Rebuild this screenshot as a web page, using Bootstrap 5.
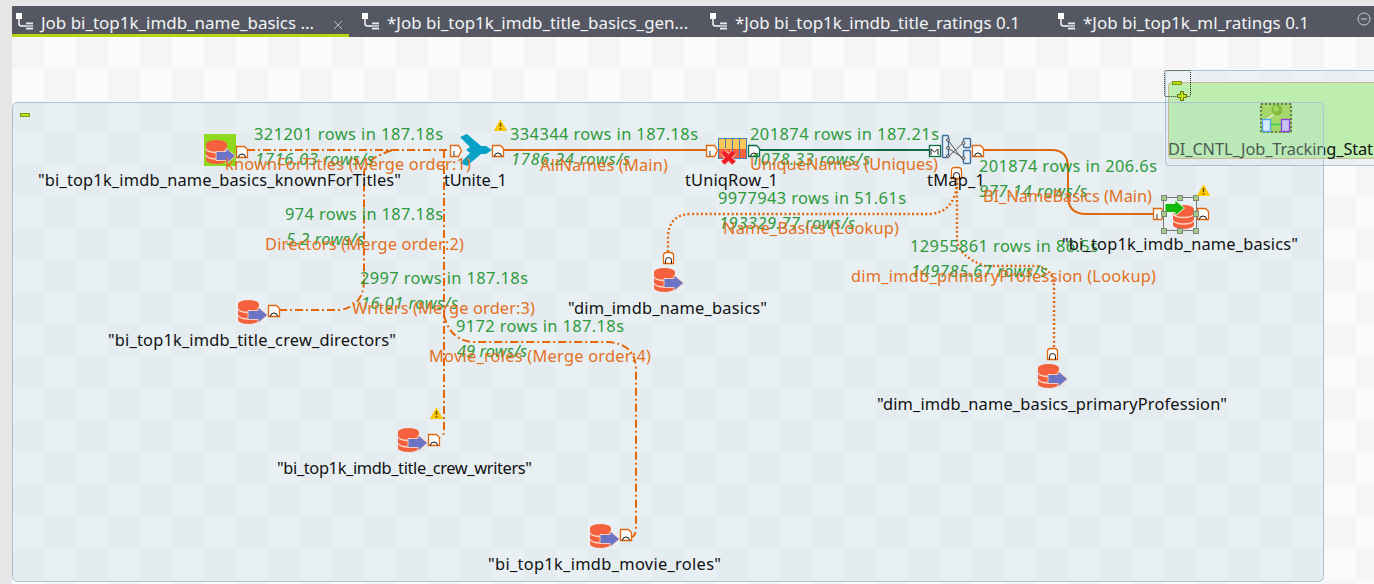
<!DOCTYPE html>
<html lang="en">
<head>
  <meta charset="UTF-8">
  <meta name="viewport" content="width=device-width, initial-scale=1.0">
  <title>Job designer</title>
  <!-- Bootstrap CSS -->
  <link href="https://cdn.jsdelivr.net/npm/bootstrap@5.3.0/dist/css/bootstrap.min.css" rel="stylesheet">
  <style>
    html, body { height: 100%; overflow: hidden; }
    body { background: #e6e6e6; font-family: "Noto Sans", "Liberation Sans", sans-serif; }
    .studio-shell { height: 584px; padding: 6px 0 0 12px; }
    .tab-strip { height: 31px; background: #555862; color: #f2f4f6; font-size: 16.95px; }
    .job-tab { flex: none; width: 348px; height: 31px; padding: 3px 0 0 13px; white-space: nowrap; }
    .job-tab.is-active { width: 337px; padding: 6px 0 0 4px; border-bottom: 3px solid #b5d50c; }
    .job-tab.is-last { flex: 1 1 auto; width: auto; }
    .job-tab > svg:first-child { flex: none; margin: 0 8px 4px 0; }
    .tab-close { margin-left: auto; margin-right: 6px; margin-top: 4px; }
    .tab-min { margin-left: auto; margin-right: 3px; margin-top: -9px; }
    .job-canvas {
      background: conic-gradient(#fbfbfb 25%, #f5f5f5 0 50%, #fbfbfb 0 75%, #f5f5f5 0) 0 0 / 64px 64px;
    }
    .job-canvas svg { display: block; }
    .job-canvas text { font-size: 16.4px; }
    .lbl-rows { fill: #2f9a3c; }
    .lbl-rate { fill: #2f9a3c; font-style: italic; }
    .lbl-link { fill: #e4701e; }
    .lbl-node { fill: #111; }
    .wire { fill: none; stroke: #e2660c; stroke-width: 2; }
    .wire-merge { stroke-dasharray: 8 3 2 3; }
    .wire-lookup { stroke-dasharray: 2 2.4; stroke-width: 2.4; }
    .wire-uniq { stroke: #0b6b45; }
    .handle { fill: #a4c98a; stroke: #7d8a78; }
    .map-box { fill: #e6f0f8; stroke: #3f6f9e; stroke-width: 1.4; }
    .map-pin { fill: #d8d8d8; stroke: #555; }
  </style>
</head>
<body>

<div class="studio-shell d-flex flex-column">

  <!-- Job tabs -->
  <svg width="0" height="0" class="position-absolute">
    <symbol id="job-ico" viewBox="0 0 17 17">
      <rect x="0" y="0" width="6" height="6" fill="#fff"/>
      <path d="M3 6v5q0 2 3 2h4" fill="none" stroke="#fff" stroke-width="1.4"/>
      <path d="M10 9.500h7v7h-7z" fill="#e9ebee"/>
      <path d="M10 11.800h7M10 14.100h7" stroke="#555862"/>
    </symbol>
  </svg>
  <div class="tab-strip d-flex flex-shrink-0">
    <div class="job-tab is-active d-flex align-items-center">
      <svg width="17" height="17"><use href="#job-ico"/></svg>
      <span>Job bi_top1k_imdb_name_basics ...</span>
      <svg class="tab-close" width="10" height="10"><path d="M1 1l8 8M9 1l-8 8" stroke="#b9bcc2"/></svg>
    </div>
    <div class="job-tab d-flex align-items-center">
      <svg width="17" height="17"><use href="#job-ico"/></svg>
      <span>*Job bi_top1k_imdb_title_basics_gen...</span>
    </div>
    <div class="job-tab d-flex align-items-center">
      <svg width="17" height="17"><use href="#job-ico"/></svg>
      <span>*Job bi_top1k_imdb_title_ratings 0.1</span>
    </div>
    <div class="job-tab is-last d-flex align-items-center">
      <svg width="17" height="17"><use href="#job-ico"/></svg>
      <span>*Job bi_top1k_ml_ratings 0.1</span>
      <svg class="tab-min" width="14" height="14">
        <circle cx="7" cy="7" r="6" fill="none" stroke="#c9ccd1"/>
        <path d="M4 7h6" stroke="#c9ccd1"/>
      </svg>
    </div>
  </div>

  <!-- Design canvas -->
  <div class="job-canvas flex-grow-1 overflow-hidden">
    <svg width="1362" height="547" viewBox="12 37 1362 547">
      <defs>
        <symbol id="db" overflow="visible">
          <path d="M0 4a10.500 4 0 0 1 21 0v16a10.500 4 0 0 1-21 0z" fill="#f4603c"/>
          <path d="M0 8.500a10.500 4 0 0 0 21 0M0 15a10.500 4 0 0 0 21 0" fill="none" stroke="#fbd2c4" stroke-width="1.3"/>
        </symbol>
        <symbol id="arrow-in" overflow="visible">
          <path d="M0 3.500h10v-3.500l9.500 8-9.500 8v-3.500H0z" fill="#6b74c6" stroke="#f8c8ba"/>
        </symbol>
        <symbol id="arrow-out" overflow="visible">
          <path d="M0 3.500h10v-3.500l9.500 8-9.500 8v-3.500H0z" fill="#12b90c" stroke="#e8f5e0"/>
        </symbol>
        <symbol id="port-out" overflow="visible">
          <path d="M.5.5h8l3 3v8h-11z" fill="#fff" stroke="#e2660c" stroke-width="1.3"/>
          <path d="M2.500 11.500a3.500 3.500 0 0 1 7 0" fill="none" stroke="#111"/>
        </symbol>
        <symbol id="port-up" overflow="visible">
          <path d="M.5 11.500v-8q0-3 3-3h4q3 0 3 3v8z" fill="#fff" stroke="#e2660c" stroke-width="1.3"/>
          <path d="M2.500 11.500v-3a3 3 0 0 1 6 0v3" fill="none" stroke="#111"/>
        </symbol>
        <symbol id="port-in" overflow="visible">
          <path d="M.5.5h8l3 5-3 6h-8z" fill="#fff" stroke="#e2660c" stroke-width="1.3"/>
          <path d="M4 6v5" stroke="#333"/>
        </symbol>
        <symbol id="warn" overflow="visible">
          <path d="M6.500 1 12.500 11.500H.5z" fill="#fbc707" stroke="#fbc707" stroke-linejoin="round"/>
          <path d="M6.500 4v4M6.500 9v1.600" stroke="#6b5200" stroke-width="1.500"/>
        </symbol>
      </defs>

      <!-- main subjob background -->
      <rect x="12.500" y="102.500" width="1311" height="479" rx="5" fill="#bed7e6" fill-opacity=".3"/>

      <!-- tracking subjob -->
      <rect x="1165.500" y="70.500" width="240" height="95" rx="4" fill="#dfeaf0" fill-opacity=".55" stroke="#a9c3d0"/>
      <rect x="1168.500" y="82.500" width="240" height="76" rx="3" fill="#bdeeb0" stroke="#c9b98f"/>
      <text x="1168" y="155" class="lbl-node" textLength="205">DI_CNTL_Job_Tracking_Stat</text>
      <rect x="1169" y="103" width="155" height="55" fill="#b4dcc4" fill-opacity=".35"/>
      <g>
        <rect x="1260" y="103" width="32" height="30" fill="#a5d76a"/>
        <rect x="1261" y="104" width="30" height="28" fill="none" stroke="#6b7b57" stroke-width="2" stroke-dasharray="2 2"/>
        <path d="M1274 114 1265 121" stroke="#e4f3d4" stroke-width="1.500"/>
        <path d="M1271 124.500h10" stroke="#3bd45a" stroke-width="1.500"/>
        <circle cx="1277" cy="110" r="5.500" fill="#83bf3f"/>
        <circle cx="1276" cy="109" r="2.500" fill="#a5d86a"/>
        <rect x="1262.500" y="119.500" width="8" height="12" fill="#d5ebfb" stroke="#4ea4ea" stroke-width="1.300"/>
        <rect x="1281.500" y="119.500" width="8" height="12" fill="#c9c4f2" stroke="#8a3fd6" stroke-width="1.300"/>
      </g>
      <rect x="1164.500" y="70.500" width="26" height="26" rx="1" fill="none" stroke="#222" stroke-dasharray="1 1"/>
      <rect x="1172.500" y="81.500" width="9" height="3" fill="#b5d50c" stroke="#7f9a1a"/>
      <path d="M1180.500 91.500h3v3h3v3h-3v3h-3v-3h-3v-3h3z" fill="#c6e80e" stroke="#5c7014"/>

      <!-- main subjob frame -->
      <rect x="12.500" y="102.500" width="1311" height="479" rx="5" fill="none" stroke="#a9c3d0"/>
      <rect x="20.500" y="113.500" width="9" height="3" fill="#b5e61d" stroke="#7f9a1a"/>

      <!-- connections -->
      <path class="wire wire-merge" d="M247 150H455"/>
      <path class="wire wire-merge" d="M279 310H340Q364 306 364 280V172Q366 158 393 150"/>
      <path class="wire wire-merge" d="M444 150V428Q444 437 441 437"/>
      <path class="wire wire-merge" d="M444 315Q450 341 474 342H608Q636 344 636 370V530Q635 536 632 537"/>
      <path class="wire" d="M498 150H708"/>
      <path class="wire wire-uniq" d="M758 150H932"/>
      <path class="wire" d="M982 150H1052Q1068 150 1068 168V196Q1068 214 1086 214H1156"/>
      <path class="wire wire-lookup" d="M668 252V238Q668 214 692 214H930Q957 212 957 178"/>
      <path class="wire wire-lookup" d="M957 178V240Q958 256 985 266H1036Q1054 268 1054 288V348"/>

      <!-- source: knownForTitles -->
      <rect x="204" y="134" width="32" height="32" fill="#90d81e"/>
      <use href="#db" x="206" y="140"/>
      <use href="#arrow-in" x="216" y="148"/>
      <use href="#port-out" x="236" y="146"/>

      <!-- tUnite -->
      <use href="#port-in" x="450" y="145"/>
      <path d="M460 137 467 134 481 146H486L492 150 486 154H481L467 166 460 163 470 153 466 150 470 147Z" fill="#07a2c6"/>
      <use href="#port-out" x="492" y="145"/>
      <use href="#warn" x="494" y="119"/>

      <!-- tUniqRow -->
      <use href="#port-in" x="706" y="145"/>
      <rect x="718.500" y="138.500" width="28" height="20" fill="#fcc75a" stroke="#3f7fb5"/>
      <rect x="719" y="149" width="27" height="9" fill="#f2623c"/>
      <path d="M725.500 139v9M732.500 139v19M739.500 139v19" stroke="#3f7fb5"/>
      <path d="M723 152 734 163M734 152 723 163" stroke="#f7b4a8" stroke-width="6.500"/>
      <path d="M723 152 734 163M734 152 723 163" stroke="#ee1c25" stroke-width="4.500"/>
      <path d="M748.500 145.500h8l3 3v8h-11z" fill="#fff" stroke="#0b6b45" stroke-width="1.300"/>
      <path d="M750.500 156.500a3.500 3.500 0 0 1 7 0" fill="none" stroke="#111"/>

      <!-- tMap -->
      <rect x="929.500" y="145.500" width="11" height="11" fill="#fff" stroke="#0b6b45" stroke-width="1.300"/>
      <path d="M931 155v-6l3.500 3 3.500-3v6" fill="none" stroke="#222"/>
      <path d="M948 140 963 160M948 157 963 143M948 148 963 158" stroke="#555" fill="none"/>
      <rect class="map-box" x="942.500" y="135.500" width="6" height="22" rx="1"/>
      <rect class="map-box" x="963.500" y="138.500" width="7" height="9" rx="1"/>
      <rect class="map-box" x="963.500" y="150.500" width="7" height="13" rx="1"/>
      <circle class="map-pin" cx="948" cy="140" r="1.500"/>
      <circle class="map-pin" cx="948" cy="148" r="1.500"/>
      <circle class="map-pin" cx="948" cy="156" r="1.500"/>
      <circle class="map-pin" cx="963.500" cy="143" r="1.500"/>
      <circle class="map-pin" cx="963.500" cy="158" r="1.500"/>
      <use href="#port-out" x="972" y="145"/>
      <use href="#port-up" x="951" y="167"/>

      <!-- target: name_basics, selected -->
      <use href="#port-in" x="1153" y="208"/>
      <use href="#db" x="1173" y="205"/>
      <use href="#arrow-out" x="1165" y="200"/>
      <use href="#port-out" x="1197" y="208"/>
      <rect x="1163.500" y="197.500" width="33" height="33" fill="none" stroke="#777"/>
      <rect class="handle" x="1161.500" y="195.500" width="5" height="5"/>
      <rect class="handle" x="1177.500" y="195.500" width="5" height="5"/>
      <rect class="handle" x="1193.500" y="195.500" width="5" height="5"/>
      <rect class="handle" x="1161.500" y="211.500" width="5" height="5"/>
      <rect class="handle" x="1193.500" y="211.500" width="5" height="5"/>
      <rect class="handle" x="1161.500" y="228.500" width="5" height="5"/>
      <rect class="handle" x="1177.500" y="228.500" width="5" height="5"/>
      <rect class="handle" x="1193.500" y="228.500" width="5" height="5"/>
      <use href="#warn" x="1197" y="184"/>

      <!-- lookups and the other sources -->
      <use href="#port-up" x="663" y="252"/>
      <use href="#db" x="654" y="268"/>
      <use href="#arrow-in" x="664" y="275"/>
      <use href="#port-up" x="1047" y="348"/>
      <use href="#db" x="1038" y="364"/>
      <use href="#arrow-in" x="1048" y="371"/>
      <use href="#db" x="238" y="300"/>
      <use href="#arrow-in" x="248" y="307"/>
      <use href="#port-out" x="268" y="305"/>
      <use href="#db" x="398" y="428"/>
      <use href="#arrow-in" x="408" y="435"/>
      <use href="#port-out" x="428" y="434"/>
      <use href="#warn" x="430" y="407"/>
      <use href="#db" x="590" y="524"/>
      <use href="#arrow-in" x="600" y="531"/>
      <use href="#port-out" x="620" y="529"/>

      <g transform="translate(0 1)">
        <!-- row stats -->
        <text class="lbl-rows" x="254" y="139" textLength="189">321201 rows in 187.18s</text>
        <text class="lbl-rate" x="255" y="164" textLength="119">1716.03 rows/s</text>
        <text class="lbl-rows" x="510" y="139" textLength="188">334344 rows in 187.18s</text>
        <text class="lbl-rate" x="511" y="164" textLength="119">1786.24 rows/s</text>
        <text class="lbl-rows" x="750" y="139" textLength="189">201874 rows in 187.21s</text>
        <text class="lbl-rate" x="751" y="164" textLength="119">1078.33 rows/s</text>
        <text class="lbl-rows" x="979" y="171" textLength="178">201874 rows in 206.6s</text>
        <text class="lbl-rate" x="979" y="196" textLength="108">977.14 rows/s</text>
        <text class="lbl-rows" x="718" y="203" textLength="188">9977943 rows in 51.61s</text>
        <text class="lbl-rate" x="719" y="228" textLength="136">193329.77 rows/s</text>
        <text class="lbl-rows" x="285" y="219" textLength="158">974 rows in 187.18s</text>
        <text class="lbl-rate" x="286" y="244" textLength="78">5.2 rows/s</text>
        <text class="lbl-rows" x="910" y="251" textLength="188">12955861 rows in 86.5s</text>
        <text class="lbl-rate" x="911" y="276" textLength="136">149785.67 rows/s</text>
        <text class="lbl-rows" x="360" y="283" textLength="168">2997 rows in 187.18s</text>
        <text class="lbl-rate" x="361" y="308" textLength="97">16.01 rows/s</text>
        <text class="lbl-rows" x="456" y="331" textLength="168">9172 rows in 187.18s</text>
        <text class="lbl-rate" x="457" y="356" textLength="70">49 rows/s</text>

        <!-- connection names -->
        <text class="lbl-link" x="225" y="169" textLength="246">knownForTitles (Merge order:1)</text>
        <text class="lbl-link" x="540" y="170" textLength="128">AllNames (Main)</text>
        <text class="lbl-link" x="750" y="169" textLength="188">UniqueNames (Uniques)</text>
        <text class="lbl-link" x="983" y="201" textLength="169">BI_NameBasics (Main)</text>
        <text class="lbl-link" x="723" y="233" textLength="176">Name_Basics (Lookup)</text>
        <text class="lbl-link" x="265" y="249" textLength="199">Directors (Merge order:2)</text>
        <text class="lbl-link" x="851" y="281" textLength="305">dim_imdb_primaryProfession (Lookup)</text>
        <text class="lbl-link" x="352" y="313" textLength="183">Writers (Merge order:3)</text>
        <text class="lbl-link" x="429" y="361" textLength="222">Movie_roles (Merge order:4)</text>

        <!-- component names -->
        <text class="lbl-node" x="38" y="185" textLength="363">"bi_top1k_imdb_name_basics_knownForTitles"</text>
        <text class="lbl-node" x="444" y="185" textLength="63">tUnite_1</text>
        <text class="lbl-node" x="685" y="185" textLength="93">tUniqRow_1</text>
        <text class="lbl-node" x="927" y="185" textLength="58">tMap_1</text>
        <text class="lbl-node" x="1062" y="249" textLength="236">"bi_top1k_imdb_name_basics"</text>
        <text class="lbl-node" x="568" y="313" textLength="199">"dim_imdb_name_basics"</text>
        <text class="lbl-node" x="108" y="345" textLength="288">"bi_top1k_imdb_title_crew_directors"</text>
        <text class="lbl-node" x="877" y="409" textLength="350">"dim_imdb_name_basics_primaryProfession"</text>
        <text class="lbl-node" x="277" y="473" textLength="255">"bi_top1k_imdb_title_crew_writers"</text>
        <text class="lbl-node" x="488" y="569" textLength="233">"bi_top1k_imdb_movie_roles"</text>
      </g>
    </svg>
  </div>
</div>

<script src="https://cdn.jsdelivr.net/npm/bootstrap@5.3.0/dist/js/bootstrap.bundle.min.js"></script>
</body>
</html>
